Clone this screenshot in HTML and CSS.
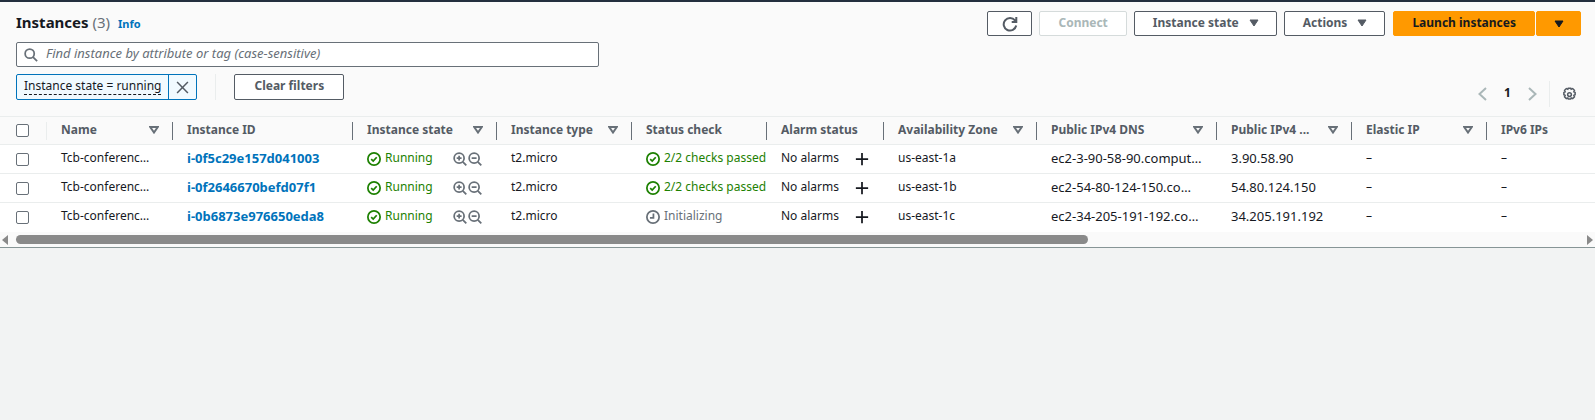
FILE: index.html
```html
<!DOCTYPE html>
<html lang="en">
<head>
<meta charset="utf-8">
<title>Instances</title>
<link rel="stylesheet" href="styles.css">
</head>
<body>
<svg class="sprite" aria-hidden="true">
  <symbol id="check" viewBox="0 0 16 16"><circle cx="8" cy="8" r="7"/><path d="M4.800 8.200l2.300 2.200 4-4.400"/></symbol>
  <symbol id="clock" viewBox="0 0 16 16"><circle cx="8" cy="8" r="7"/><path d="M8.500 4v5H4.500"/></symbol>
  <symbol id="zoom-in" viewBox="0 0 16 16"><circle cx="7" cy="7" r="5.700"/><path d="M11.200 11.200L15.200 15.200M4.200 7h5.600M7 4.200v5.600"/></symbol>
  <symbol id="zoom-out" viewBox="0 0 16 16"><circle cx="7" cy="7" r="5.700"/><path d="M11.200 11.200L15.200 15.200M4.200 7h5.600"/></symbol>
  <symbol id="plus" viewBox="0 0 16 16"><path d="M8 1v14M1 8h14"/></symbol>
  <symbol id="sort" viewBox="0 0 10 8"><path d="M1.200 1h7.600L5 6.500z"/></symbol>
  <symbol id="caret" viewBox="0 0 10 8"><path d="M1 1h8L5 7z"/></symbol>
</svg>
<main class="panel">
  <header class="panel-header">
    <div class="title-row">
      <h1 class="title">Instances <span class="count">(3)</span></h1>
      <a class="info" href="#info">Info</a>
      <div class="actions">
        <button class="btn btn-icon" type="button" aria-label="Refresh"><svg class="icon" viewBox="0 0 16 16"><path d="M14.200 9.500A6.300 6.300 0 1 1 13 4.400L14 5.800M14.300 1v5H9.700"/></svg></button>
        <button class="btn" type="button" disabled>Connect</button>
        <button class="btn btn-menu" type="button">Instance state <svg class="caret"><use href="#caret"/></svg></button>
        <button class="btn btn-menu" type="button">Actions <svg class="caret"><use href="#caret"/></svg></button>
        <div class="split">
          <button class="btn btn-primary" type="button">Launch instances</button>
          <button class="btn btn-primary btn-icon" type="button" aria-label="More launch options"><svg class="caret"><use href="#caret"/></svg></button>
        </div>
      </div>
    </div>
    <label class="search">
      <svg class="icon icon-search" viewBox="0 0 16 16"><circle cx="6.500" cy="6.500" r="5.200"/><path d="M10.300 10.300L15 15"/></svg>
      <input class="search-input" type="text" placeholder="Find instance by attribute or tag (case-sensitive)" aria-label="Find instance">
    </label>
    <div class="filter-row">
      <div class="token">
        <button class="token-label" type="button"><span class="token-text">Instance state = running</span></button>
        <button class="token-close" type="button" aria-label="Remove filter"><svg class="icon icon-close" viewBox="0 0 12 12"><path d="M1 1l10 10M11 1L1 11"/></svg></button>
      </div>
      <span class="divider"></span>
      <button class="btn btn-clear" type="button">Clear filters</button>
      <nav class="pager" aria-label="Pagination">
        <button class="page-btn" type="button" aria-label="Previous page" disabled><svg class="icon-angle" viewBox="0 0 9 14"><path d="M8 1L1.500 7L8 13"/></svg></button>
        <button class="page-btn page-number" type="button">1</button>
        <button class="page-btn" type="button" aria-label="Next page" disabled><svg class="icon-angle" viewBox="0 0 9 14"><path d="M1 1l6.500 6L1 13"/></svg></button>
        <span class="divider"></span>
        <button class="page-btn" type="button" aria-label="Preferences"><svg class="icon icon-gear" viewBox="0 0 16 16"><circle cx="8" cy="8" r="2"/><path d="M6.700 1.200h2.600l.5 1.200 1.600-.7 1.900 1.900-.7 1.500 1.400.7v2.400l-1.400.7.7 1.500-1.900 1.900-1.600-.7-.5 1.200H6.700l-.5-1.200-1.600.7-1.900-1.900.7-1.500-1.400-.7V5.800l1.400-.7-.7-1.500 1.900-1.900 1.600.7z"/></svg></button>
      </nav>
    </div>
  </header>
  <table class="grid">
    <colgroup>
      <col class="w-select"><col class="w-name"><col class="w-id"><col class="w-state"><col class="w-std"><col class="w-std"><col class="w-alarm"><col class="w-zone"><col class="w-id"><col class="w-std"><col class="w-std"><col>
    </colgroup>
    <thead>
      <tr>
        <th><div class="head head-select"><input class="check" type="checkbox" aria-label="Select all"></div></th>
        <th><div class="head">Name<svg class="sort"><use href="#sort"/></svg></div></th>
        <th><div class="head">Instance ID</div></th>
        <th><div class="head">Instance state<svg class="sort"><use href="#sort"/></svg></div></th>
        <th><div class="head">Instance type<svg class="sort"><use href="#sort"/></svg></div></th>
        <th><div class="head">Status check</div></th>
        <th><div class="head">Alarm status</div></th>
        <th><div class="head">Availability Zone<svg class="sort"><use href="#sort"/></svg></div></th>
        <th><div class="head">Public IPv4 DNS<svg class="sort"><use href="#sort"/></svg></div></th>
        <th><div class="head">Public IPv4 ...<svg class="sort"><use href="#sort"/></svg></div></th>
        <th><div class="head">Elastic IP<svg class="sort"><use href="#sort"/></svg></div></th>
        <th><div class="head head-last">IPv6 IPs</div></th>
      </tr>
    </thead>
    <tbody>
      <tr>
        <td><div class="cell cell-select"><input class="check" type="checkbox" aria-label="Select i-0f5c29e157d041003"></div></td>
        <td><div class="cell">Tcb-conferenc…</div></td>
        <td><div class="cell"><a class="link" href="#i-0f5c29e157d041003">i-0f5c29e157d041003</a></div></td>
        <td><div class="cell ok"><svg class="status"><use href="#check"/></svg>Running<span class="tools"><button class="tool" type="button" aria-label="Include in filter"><svg class="lens"><use href="#zoom-in"/></svg></button><button class="tool" type="button" aria-label="Exclude from filter"><svg class="lens"><use href="#zoom-out"/></svg></button></span></div></td>
        <td><div class="cell">t2.micro</div></td>
        <td><div class="cell ok"><svg class="status"><use href="#check"/></svg>2/2 checks passed</div></td>
        <td><div class="cell">No alarms<button class="tool add" type="button" aria-label="Add alarm"><svg class="plus"><use href="#plus"/></svg></button></div></td>
        <td><div class="cell">us-east-1a</div></td>
        <td><div class="cell ip">ec2-3-90-58-90.comput…</div></td>
        <td><div class="cell ip">3.90.58.90</div></td>
        <td><div class="cell">–</div></td>
        <td><div class="cell">–</div></td>
      </tr>
      <tr>
        <td><div class="cell cell-select"><input class="check" type="checkbox" aria-label="Select i-0f2646670befd07f1"></div></td>
        <td><div class="cell">Tcb-conferenc…</div></td>
        <td><div class="cell"><a class="link" href="#i-0f2646670befd07f1">i-0f2646670befd07f1</a></div></td>
        <td><div class="cell ok"><svg class="status"><use href="#check"/></svg>Running<span class="tools"><button class="tool" type="button" aria-label="Include in filter"><svg class="lens"><use href="#zoom-in"/></svg></button><button class="tool" type="button" aria-label="Exclude from filter"><svg class="lens"><use href="#zoom-out"/></svg></button></span></div></td>
        <td><div class="cell">t2.micro</div></td>
        <td><div class="cell ok"><svg class="status"><use href="#check"/></svg>2/2 checks passed</div></td>
        <td><div class="cell">No alarms<button class="tool add" type="button" aria-label="Add alarm"><svg class="plus"><use href="#plus"/></svg></button></div></td>
        <td><div class="cell">us-east-1b</div></td>
        <td><div class="cell ip">ec2-54-80-124-150.co…</div></td>
        <td><div class="cell ip">54.80.124.150</div></td>
        <td><div class="cell">–</div></td>
        <td><div class="cell">–</div></td>
      </tr>
      <tr>
        <td><div class="cell cell-select"><input class="check" type="checkbox" aria-label="Select i-0b6873e976650eda8"></div></td>
        <td><div class="cell">Tcb-conferenc…</div></td>
        <td><div class="cell"><a class="link" href="#i-0b6873e976650eda8">i-0b6873e976650eda8</a></div></td>
        <td><div class="cell ok"><svg class="status"><use href="#check"/></svg>Running<span class="tools"><button class="tool" type="button" aria-label="Include in filter"><svg class="lens"><use href="#zoom-in"/></svg></button><button class="tool" type="button" aria-label="Exclude from filter"><svg class="lens"><use href="#zoom-out"/></svg></button></span></div></td>
        <td><div class="cell">t2.micro</div></td>
        <td><div class="cell pending"><svg class="status"><use href="#clock"/></svg>Initializing</div></td>
        <td><div class="cell">No alarms<button class="tool add" type="button" aria-label="Add alarm"><svg class="plus"><use href="#plus"/></svg></button></div></td>
        <td><div class="cell">us-east-1c</div></td>
        <td><div class="cell ip">ec2-34-205-191-192.co…</div></td>
        <td><div class="cell ip">34.205.191.192</div></td>
        <td><div class="cell">–</div></td>
        <td><div class="cell">–</div></td>
      </tr>
    </tbody>
  </table>
  <div class="scrollbar">
    <svg class="scroll-arrow" viewBox="0 0 8 10"><path d="M7 0v10L1 5z"/></svg>
    <div class="track"><div class="thumb"></div></div>
    <svg class="scroll-arrow" viewBox="0 0 8 10"><path d="M1 0v10l6-5z"/></svg>
  </div>
</main>
</body>
</html>
```
FILE: styles.css
```css
* { box-sizing: border-box; }
body {
  margin: 0;
  background: #f2f3f3;
  color: #16191f;
  font: 12px/16px "Noto Sans", "Open Sans", sans-serif;
}
button, input { font: inherit; color: inherit; margin: 0; }
button { cursor: pointer; }
svg { display: block; flex: none; fill: none; stroke: currentColor; }
.sprite { position: absolute; width: 0; height: 0; }

.panel {
  background: #fafafa;
  border-top: 2px solid #232f3e;
  border-bottom: 1px solid #879596;
}
.panel-header { padding: 9px 14px 9px 16px; }
.title-row { display: flex; align-items: center; height: 25px; margin-bottom: 6px; }
.title { margin: 0; padding-bottom: 3px; font-size: 15px; line-height: 22px; font-weight: 700; }
.count { font-weight: 400; color: #687078; }
.info { margin-left: 8px; font-size: 11px; font-weight: 700; color: #0073bb; text-decoration: none; }
.actions { display: flex; gap: 7px; margin-left: auto; }

.btn {
  display: flex;
  align-items: center;
  justify-content: center;
  height: 25px;
  padding: 0 18px 2px;
  border: 1px solid #545b64;
  border-radius: 2px;
  background: #fff;
  color: #545b64;
  font-weight: 700;
  white-space: nowrap;
}
.btn:disabled { border-color: #d5dbdb; color: #aab7b8; }
.btn-icon { width: 45px; padding: 0; }
.btn-menu { gap: 10px; padding: 0 17px 1px 18px; }
.btn-primary { border-color: #f90; background: #f90; color: #16191f; }
.split { display: flex; gap: 1px; margin-left: 1px; }
.caret { width: 10px; height: 8px; fill: currentColor; }
.icon { width: 16px; height: 16px; stroke-width: 2; }

.search {
  display: flex;
  align-items: center;
  gap: 8px;
  max-width: 583px;
  height: 25px;
  padding: 0 7px;
  margin-bottom: 7px;
  border: 1px solid #687078;
  border-radius: 2px;
  background: #fff;
}
.icon-search { width: 14px; height: 14px; color: #687078; }
.search-input { flex: 1; min-width: 0; padding: 0 0 3px; border: 0; outline: 0; background: none; font-size: 13px; }
.search-input::placeholder { color: #687078; font-style: italic; opacity: 1; }

.filter-row { display: flex; align-items: flex-start; height: 33px; }
.divider { width: 1px; height: 26px; background: #eaeded; }
.token { display: flex; height: 26px; margin-right: 18px; border: 1px solid #0073bb; border-radius: 2px; background: #f1faff; }
.token-label { padding: 0 7px 2px; border: 0; background: none; }
.token-text { display: block; line-height: 17px; border-bottom: 1px dashed #16191f; }
.token-close { display: flex; align-items: center; justify-content: center; width: 28px; padding: 0; border: 0; border-left: 1px solid #0073bb; background: none; color: #545b64; }
.icon-close { width: 13px; height: 13px; stroke-width: 1.4; }
.btn-clear { height: 26px; margin-left: 18px; padding: 0 19px 2px; }

.pager { display: flex; align-items: center; align-self: flex-end; height: 26px; margin: 0 4px 0 auto; }
.page-btn { display: flex; align-items: center; justify-content: center; height: 26px; padding: 0; border: 0; background: none; color: #545b64; }
.page-btn:disabled { color: #aab7b8; }
.page-number { width: 41px; padding-bottom: 2px; color: #16191f; font-weight: 700; }
.icon-angle { width: 9px; height: 14px; stroke-width: 2; }
.pager .divider { margin: 0 12px; }
.icon-gear { width: 15px; height: 15px; stroke-width: 1.6; }

.grid { width: 100%; table-layout: fixed; border-collapse: separate; border-spacing: 0; }
.w-select { width: 47px; }
.w-name { width: 126px; }
.w-id { width: 180px; }
.w-state { width: 144px; }
.w-std { width: 135px; }
.w-alarm { width: 117px; }
.w-zone { width: 153px; }
.grid th, .grid td { padding: 0; overflow: hidden; text-align: left; white-space: nowrap; }
.grid th { height: 29px; border-top: 1px solid #eaeded; border-bottom: 1px solid #eaeded; color: #545b64; }
.grid td { height: 29px; border-bottom: 1px solid #eaeded; background: #fff; }
.grid tbody tr:last-child td { border-bottom-color: #fff; }
.head { display: flex; align-items: center; height: 18px; padding: 0 13px 2px 14px; border-right: 1px solid #687078; }
.head-select { padding: 0 0 0 16px; border-right-color: #eaeded; }
.head-last { border-right: 0; }
.sort { width: 10px; height: 8px; margin-left: auto; stroke-width: 2; color: #687078; }
.cell { display: flex; align-items: center; height: 18px; padding: 0 0 2px 14px; }
.cell-select { padding: 0 0 0 16px; }
.check { appearance: none; width: 13px; height: 13px; border: 1px solid #687078; border-radius: 2px; background: #fff; }
.link { font-size: 13px; font-weight: 700; color: #0073bb; text-decoration: none; }
.ip { font-size: 13px; }
.ok { color: #1d8102; }
.pending { color: #687078; }
.status { width: 14px; height: 14px; margin: 2px 4px 0 0; stroke-width: 2; }
.tools { display: flex; gap: 1px; margin: 2px 15px 0 auto; color: #687078; }
.tool { padding: 0; border: 0; background: none; }
.lens { width: 14px; height: 14px; stroke-width: 2; }
.add { margin: 2px 15px 0 auto; }
.plus { width: 14px; height: 14px; stroke-width: 2; }

.scrollbar { display: flex; align-items: center; justify-content: space-between; height: 15px; }
.scroll-arrow { width: 8px; height: 10px; margin: 0 1px; fill: #8a8a8a; stroke: none; }
.track { flex: 1; margin: 0 6px; }
.thumb { width: 68.6%; height: 9px; border-radius: 5px; background: #8a8a8a; }
```
